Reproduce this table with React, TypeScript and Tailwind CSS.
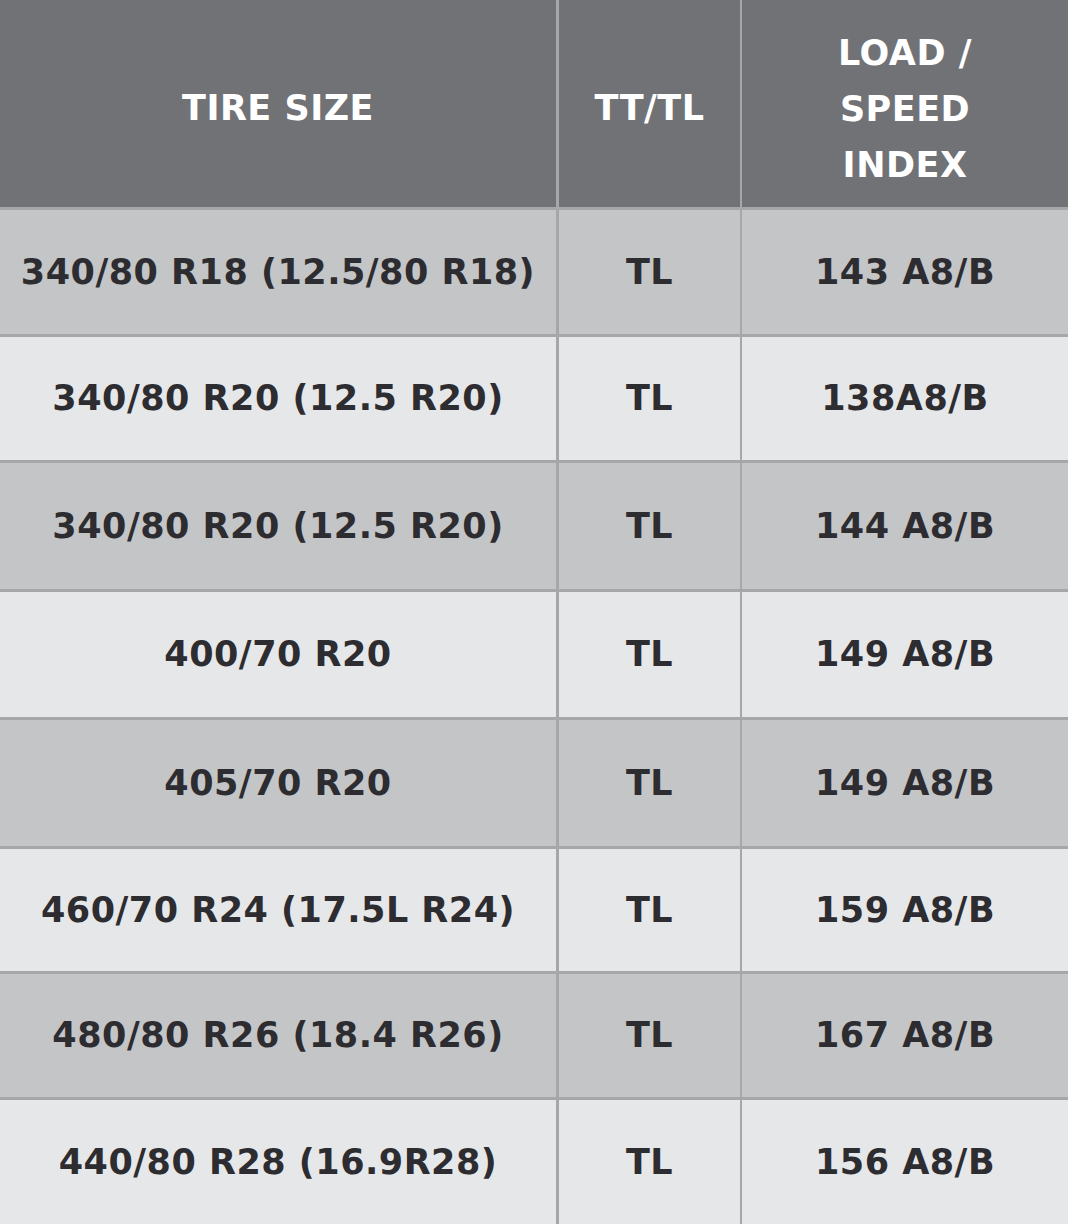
import React from "react";

const rows: [string, string, string][] = [
  ["340/80 R18 (12.5/80 R18)", "TL", "143 A8/B"],
  ["340/80 R20 (12.5 R20)", "TL", "138A8/B"],
  ["340/80 R20 (12.5 R20)", "TL", "144 A8/B"],
  ["400/70 R20", "TL", "149 A8/B"],
  ["405/70 R20", "TL", "149 A8/B"],
  ["460/70 R24 (17.5L R24)", "TL", "159 A8/B"],
  ["480/80 R26 (18.4 R26)", "TL", "167 A8/B"],
  ["440/80 R28 (16.9R28)", "TL", "156 A8/B"],
];

const heights = ["h-[127px]", "h-[126px]", "h-[129px]", "h-[128px]", "h-[129px]", "h-[125px]", "h-[126px]", "h-[127px]"];

export default function App() {
  return (
    <div
      className="w-[1068px] h-[1224px] overflow-hidden bg-[#e6e7e8] text-[35px] font-bold tracking-[0.5px]"
      style={{ fontFamily: '"DejaVu Sans", sans-serif' }}
    >
      <div className="flex h-[207px] bg-[#717276] text-white">
        <div className="w-[556px] flex items-center justify-center pt-[10px]">TIRE SIZE</div>
        <div className="w-[3px] bg-[#a6a7a9]" />
        <div className="w-[181px] flex items-center justify-center pt-[10px]">TT/TL</div>
        <div className="w-[2px] bg-[#a6a7a9]" />
        <div className="flex-1 flex flex-col items-center justify-center leading-[56px] text-center pt-[10px]">
          <span>LOAD /</span>
          <span>SPEED</span>
          <span>INDEX</span>
        </div>
      </div>
      {rows.map((r, i) => (
        <div
          key={i}
          className={`flex border-t-[3px] border-[#a6a7a9] text-[#2d2c30] ${heights[i]} ${
            i % 2 === 0 ? "bg-[#c4c5c7]" : "bg-[#e6e7e8]"
          }`}
        >
          <div className="w-[556px] flex items-center justify-center whitespace-nowrap">{r[0]}</div>
          <div className="w-[3px] bg-[#a6a7a9]" />
          <div className="w-[181px] flex items-center justify-center">{r[1]}</div>
          <div className="w-[2px] bg-[#a6a7a9]" />
          <div className="flex-1 flex items-center justify-center whitespace-nowrap">{r[2]}</div>
        </div>
      ))}
    </div>
  );
}
